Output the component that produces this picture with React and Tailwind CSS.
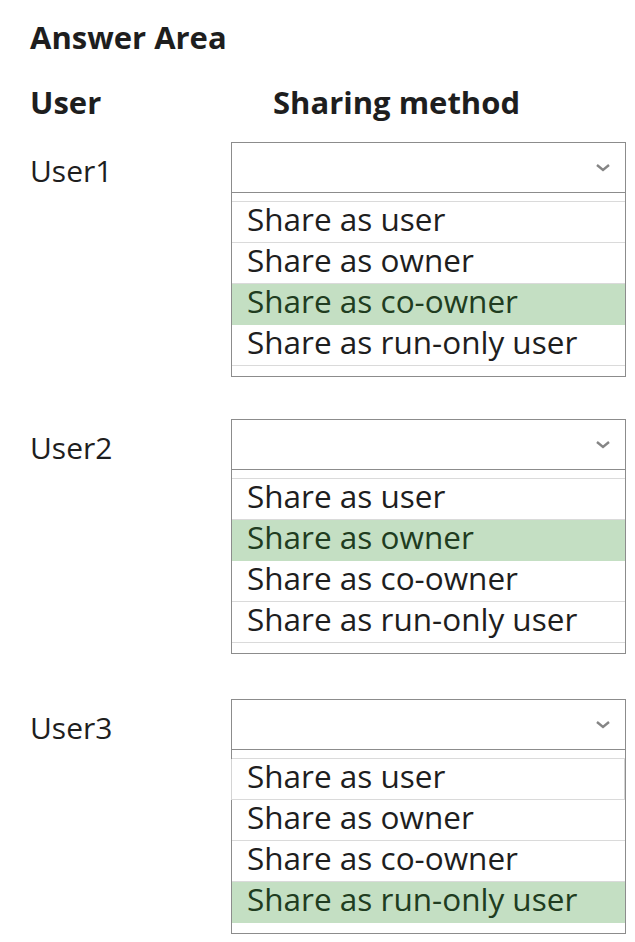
const OPTIONS = ['Share as user', 'Share as owner', 'Share as co-owner', 'Share as run-only user'];

const ROWS = [
  { user: 'User1', picked: 2, gap: 'mt-[24px]' },
  { user: 'User2', picked: 1, gap: 'mt-[42px]' },
  { user: 'User3', picked: 3, gap: 'mt-[45px]', framedFirst: true },
];

function Chevron() {
  return (
    <svg width="16" height="9" viewBox="0 0 16 9" fill="none">
      <polyline points="2,2 8,7 14,2" stroke="#858585" strokeWidth="2.4" />
    </svg>
  );
}

function Dropdown({ picked, framedFirst }) {
  return (
    <div className="w-[395px] border border-[#8c8c8c] bg-white">
      {/* closed select header */}
      <div className="h-[50px] flex items-center justify-end pr-[14px] border-b border-[#8c8c8c]">
        <Chevron />
      </div>

      {/* expanded option list */}
      <div className="pt-[8px] pb-[10px]">
        <div className="border-t border-[#dadada]">
          {OPTIONS.map((opt, i) => (
            <div
              key={opt}
              className={
                'h-[41px] pl-[15px] border-b text-[31.5px] leading-[34px] whitespace-nowrap ' +
                (i === picked
                  ? 'bg-[#c4dfc3] border-[#c4dfc3] text-[#203c20]'
                  : 'border-[#dadada] text-[#1e1e1e]') +
                (framedFirst && i === 0 ? ' border-x border-x-[#d4d4d4] -ml-px' : '')
              }
            >
              {opt}
            </div>
          ))}
        </div>
      </div>
    </div>
  );
}

export default function App() {
  return (
    <div className="min-h-[942px] bg-white pl-[30px] pt-[22px] font-['Open_Sans',sans-serif] text-[#1e1e1e]">
      <h1 className="text-[31px] leading-[31px] font-bold">Answer Area</h1>

      <div className="flex mt-[34px] text-[31px] leading-[31px] font-bold">
        <div className="w-[243px]">User</div>
        <div>Sharing method</div>
      </div>

      <div className="flex flex-col">
        {ROWS.map((r) => (
          <div key={r.user} className={'flex ' + r.gap}>
            <div className="w-[201px] pt-[14px] text-[30px] leading-[30px]">{r.user}</div>
            <Dropdown picked={r.picked} framedFirst={r.framedFirst} />
          </div>
        ))}
      </div>
    </div>
  );
}
